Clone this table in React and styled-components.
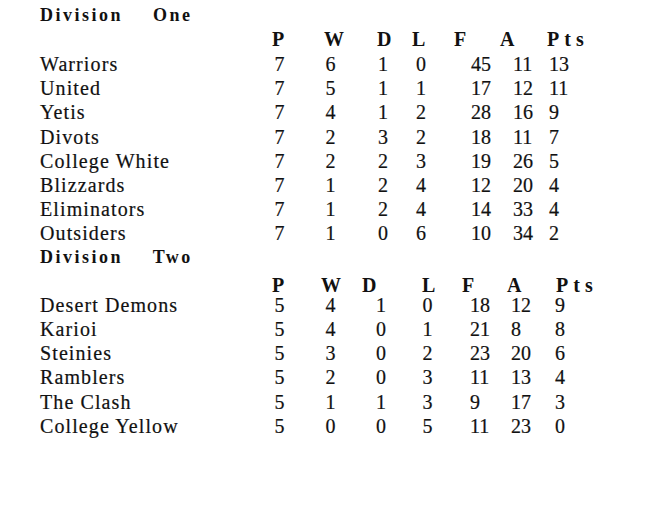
import React from "react";
import styled, { createGlobalStyle } from "styled-components";

const GlobalStyle = createGlobalStyle`
  html, body {
    margin: 0;
    padding: 0;
    background: #ffffff;
  }
  body {
    font-family: "Liberation Serif", "Times New Roman", serif;
    color: #111111;
  }
`;

const Page = styled.main`
  box-sizing: border-box;
  width: 653px;
  height: 518px;
  padding: 2.5px 0 0 40px;
  background: #ffffff;
`;

const Division = styled.section`
  display: block;
`;

const Title = styled.h2`
  margin: ${(p) => p.$top}px 0 0;
  font-family: "Liberation Serif", "Times New Roman", serif;
  font-weight: 700;
  font-size: 18px;
  line-height: 24.2px;
  letter-spacing: 2.5px;
  word-spacing: 23px;
  white-space: nowrap;
`;

const HeadRow = styled.div`
  display: grid;
  grid-template-columns: ${(p) => p.$cols};
  margin-top: ${(p) => p.$top}px;
  font-family: "Liberation Serif", "Times New Roman", serif;
  font-weight: 700;
  font-size: 20px;
  line-height: 24.2px;
`;

const HeadCell = styled.span`
  letter-spacing: ${(p) => (p.$wide ? "5px" : "0")};
  white-space: nowrap;
`;

const Body = styled.div`
  margin-top: ${(p) => p.$top}px;
`;

const Row = styled.div`
  display: grid;
  grid-template-columns: ${(p) => p.$cols};
  font-family: "Liberation Serif", "Times New Roman", serif;
  font-size: 20px;
  line-height: 24.2px;
  -webkit-text-stroke: 0.2px #111111;
`;

const Team = styled.span`
  letter-spacing: 1.1px;
  white-space: nowrap;
`;

const Num = styled.span`
  white-space: nowrap;
`;

const HEAD = ["P", "W", "D", "L", "F", "A", "Pts"];

const divisions = [
  {
    title: "Division One",
    titleTop: 0,
    headTop: 0,
    bodyTop: 1,
    headCols: "232px 52px 53px 35px 42px 46px 47px auto",
    bodyCols: "234.5px 51px 52.5px 38px 55px 42px 36px auto",
    rows: [
      ["Warriors", 7, 6, 1, 0, 45, 11, 13],
      ["United", 7, 5, 1, 1, 17, 12, 11],
      ["Yetis", 7, 4, 1, 2, 28, 16, 9],
      ["Divots", 7, 2, 3, 2, 18, 11, 7],
      ["College White", 7, 2, 2, 3, 19, 26, 5],
      ["Blizzards", 7, 1, 2, 4, 12, 20, 4],
      ["Eliminators", 7, 1, 2, 4, 14, 33, 4],
      ["Outsiders", 7, 1, 0, 6, 10, 34, 2],
    ],
  },
  {
    title: "Division Two",
    titleTop: -1,
    headTop: 4,
    bodyTop: -4.2,
    headCols: "232px 49px 41px 60px 40px 45px 49px auto",
    bodyCols: "234.5px 51px 50.5px 46.5px 47.5px 41px 44px auto",
    rows: [
      ["Desert Demons", 5, 4, 1, 0, 18, 12, 9],
      ["Karioi", 5, 4, 0, 1, 21, 8, 8],
      ["Steinies", 5, 3, 0, 2, 23, 20, 6],
      ["Ramblers", 5, 2, 0, 3, 11, 13, 4],
      ["The Clash", 5, 1, 1, 3, 9, 17, 3],
      ["College Yellow", 5, 0, 0, 5, 11, 23, 0],
    ],
  },
];

export default function App() {
  return (
    <>
      <GlobalStyle />
      <Page>
        {divisions.map((d) => (
          <Division key={d.title}>
            <Title $top={d.titleTop}>{d.title}</Title>
            <HeadRow $cols={d.headCols} $top={d.headTop}>
              <span />
              {HEAD.map((h) => (
                <HeadCell key={h} $wide={h === "Pts"}>
                  {h}
                </HeadCell>
              ))}
            </HeadRow>
            <Body $top={d.bodyTop}>
              {d.rows.map(([team, ...nums]) => (
                <Row key={team} $cols={d.bodyCols}>
                  <Team>{team}</Team>
                  {nums.map((n, i) => (
                    <Num key={i}>{n}</Num>
                  ))}
                </Row>
              ))}
            </Body>
          </Division>
        ))}
      </Page>
    </>
  );
}
